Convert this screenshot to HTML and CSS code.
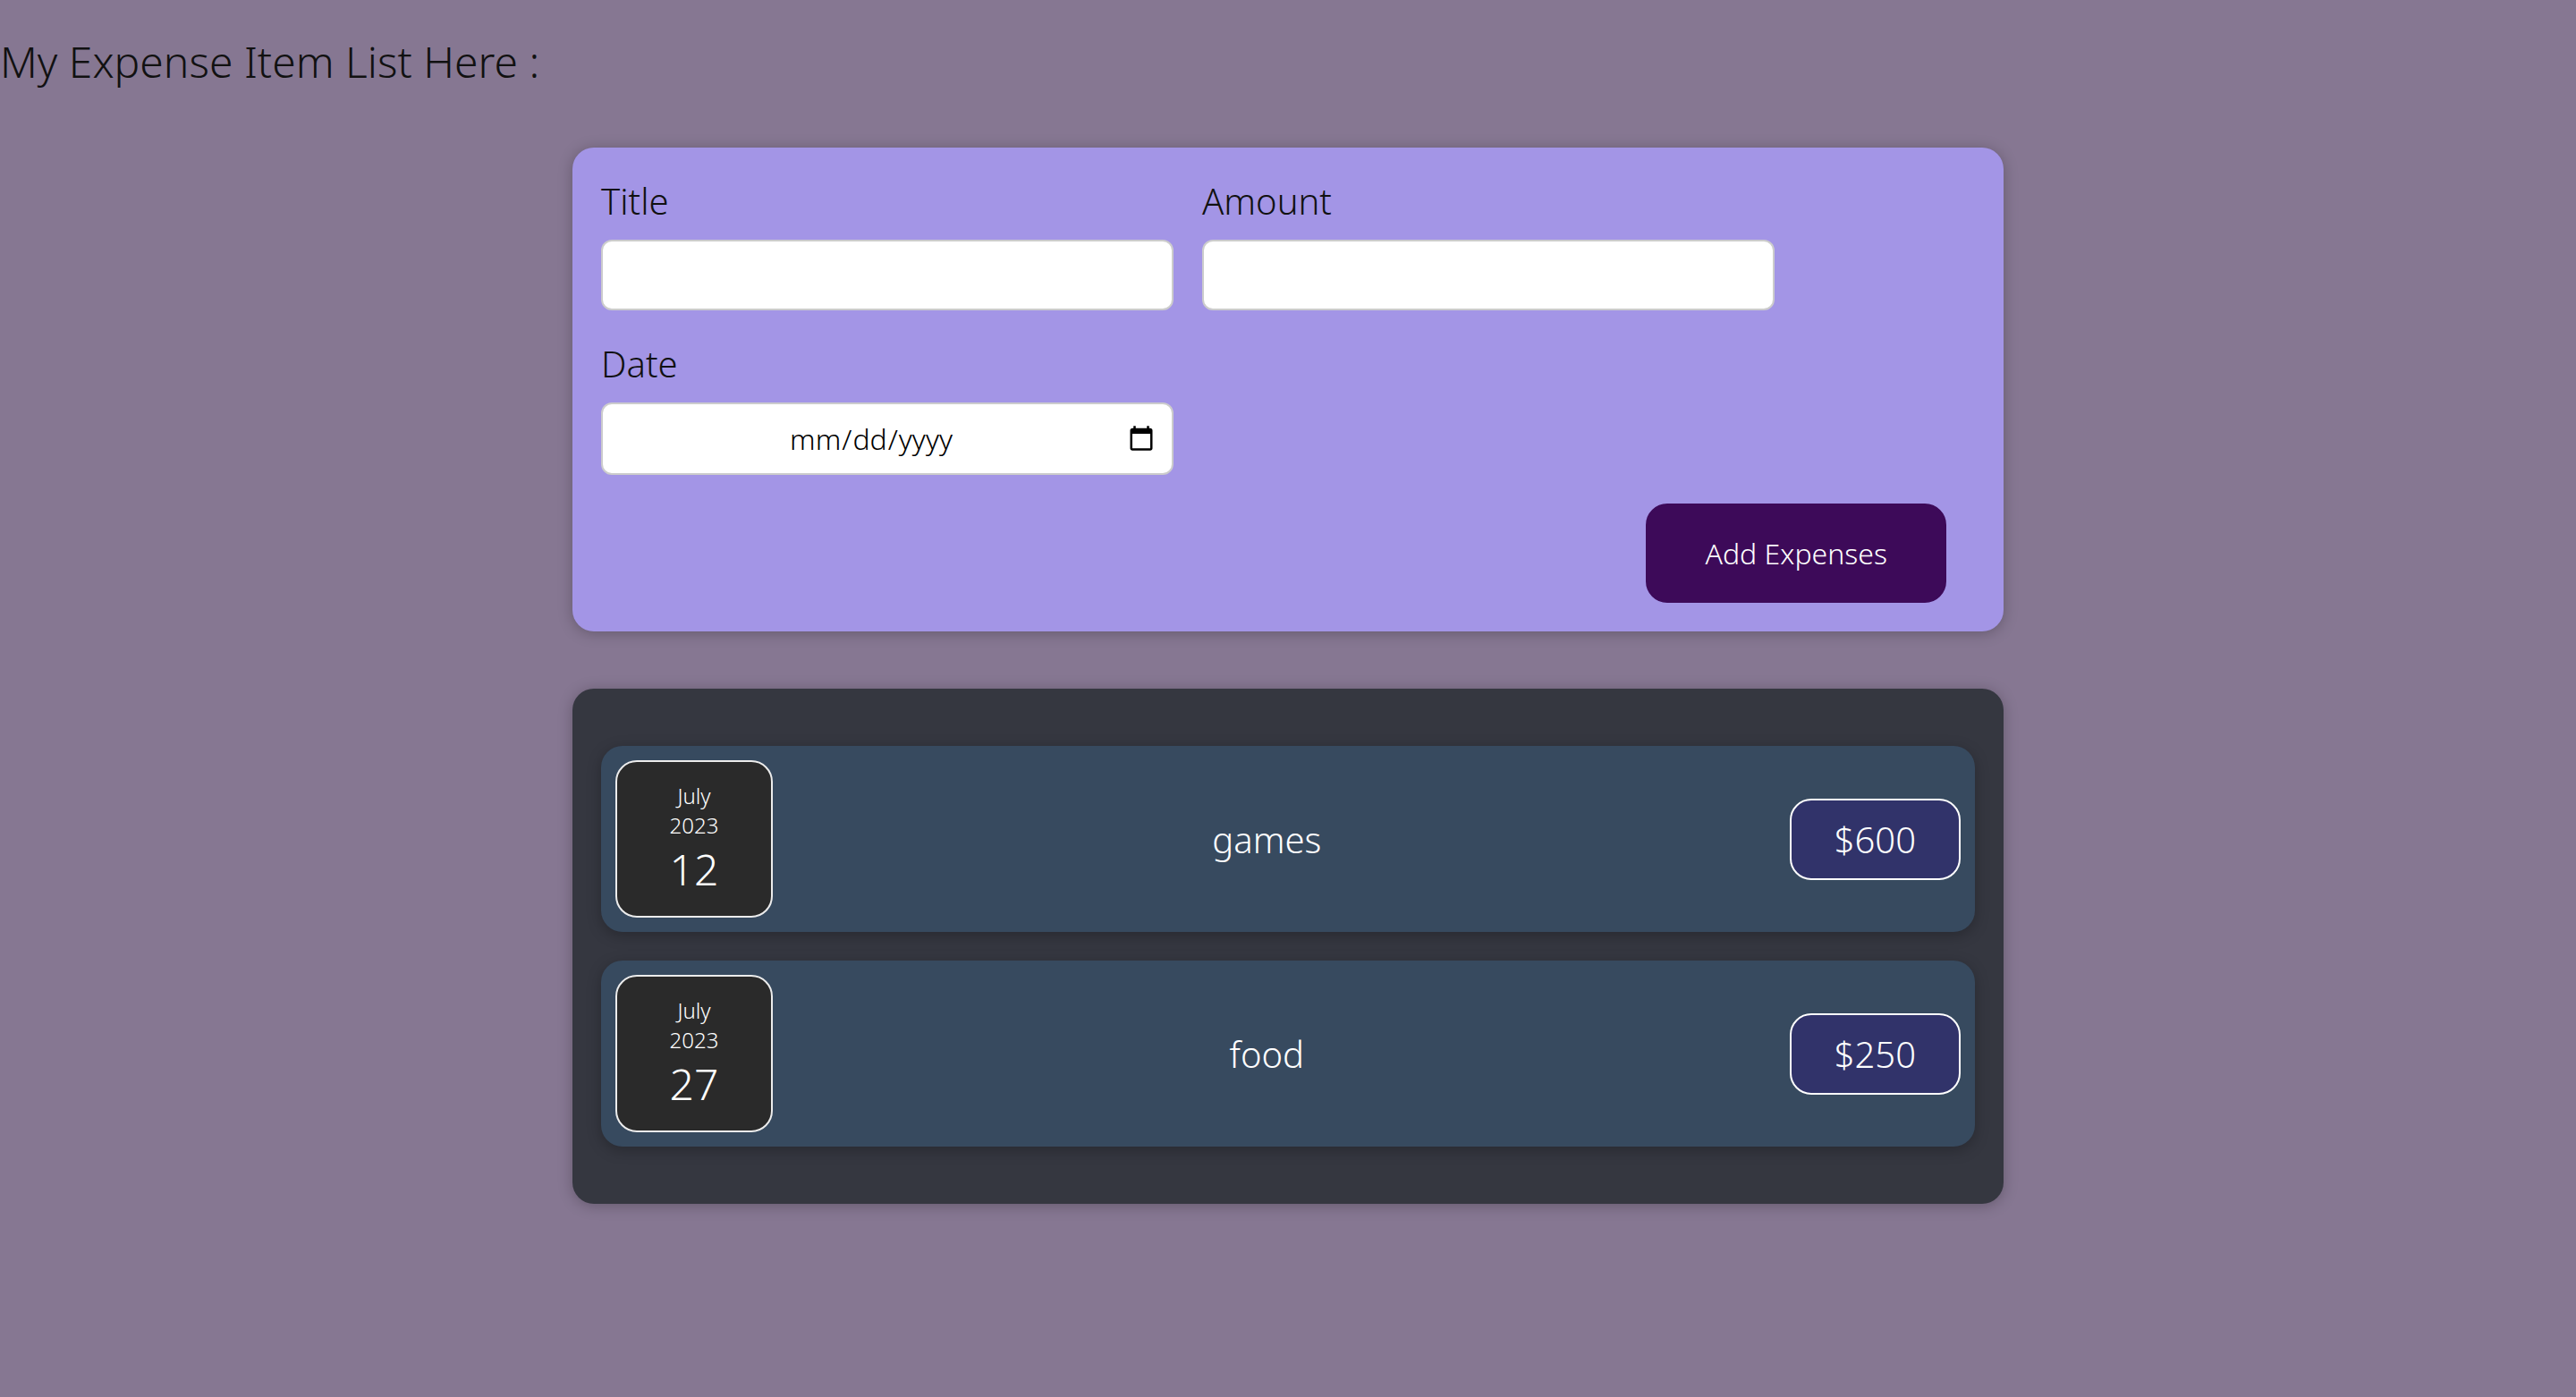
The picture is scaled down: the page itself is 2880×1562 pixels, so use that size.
FILE: index.html
```html
<!DOCTYPE html>
<html lang="en">
<head>
<meta charset="utf-8">
<title>Expenses</title>
<link rel="stylesheet" href="styles.css">
</head>
<body>
<h2 class="page-title">My Expense Item List Here :</h2>

<div class="new-expense">
  <form class="expense-form">
    <div class="controls">
      <div class="control">
        <label class="control-label">Title</label>
        <input class="control-input" type="text">
      </div>
      <div class="control">
        <label class="control-label">Amount</label>
        <input class="control-input" type="number">
      </div>
      <div class="control">
        <label class="control-label">Date</label>
        <input class="control-input date-input" type="date">
      </div>
    </div>
    <div class="actions">
      <button class="add-button" type="button">Add Expenses</button>
    </div>
  </form>
</div>

<div class="expenses">
  <div class="expense-item">
    <div class="expense-date">
      <div class="date-month">July</div>
      <div class="date-year">2023</div>
      <div class="date-day">12</div>
    </div>
    <h2 class="item-title">games</h2>
    <div class="item-price">$600</div>
  </div>
  <div class="expense-item">
    <div class="expense-date">
      <div class="date-month">July</div>
      <div class="date-year">2023</div>
      <div class="date-day">27</div>
    </div>
    <h2 class="item-title">food</h2>
    <div class="item-price">$250</div>
  </div>
</div>
</body>
</html>
```

FILE: styles.css
```css
* {
  box-sizing: border-box;
}

html, body {
  margin: 0;
  padding: 0;
}

body {
  background-color: #867792;
  font-family: "Noto Sans", "Open Sans", sans-serif;
  font-weight: 300;
  font-size: 32px;
  min-height: 100vh;
}

.page-title {
  margin: 36px 0 0 0;
  font-size: 48px;
  font-weight: 300;
  color: #111;
  line-height: normal;
}

.new-expense {
  background-color: #a395e6;
  width: 1600px;
  margin: 64px auto;
  padding: 32px;
  border-radius: 24px;
  box-shadow: 0 2px 16px rgba(0, 0, 0, 0.25);
}

.controls {
  display: flex;
  flex-wrap: wrap;
  gap: 32px;
  margin-bottom: 32px;
}

.control-label {
  display: block;
  font-size: 40px;
  color: #111;
  margin-bottom: 16px;
  line-height: normal;
}

.control-input {
  font: inherit;
  line-height: normal;
  padding: 16px;
  border-radius: 12px;
  border: 2px solid #ccc;
  width: 640px;
  background: #fff;
  color: #000;
}

.date-input {
  text-align: center;
}

.actions {
  text-align: right;
}

.add-button {
  font: inherit;
  line-height: normal;
  padding: 32px 64px;
  border: 2px solid #3d0a59;
  background-color: #3d0a59;
  color: #fff;
  border-radius: 24px;
  margin-right: 32px;
}

.expenses {
  background-color: #353740;
  width: 1600px;
  margin: 64px auto;
  padding: 32px;
  border-radius: 24px;
  box-shadow: 0 2px 16px rgba(0, 0, 0, 0.25);
}

.expense-item {
  display: flex;
  align-items: center;
  background-color: #374a5f;
  padding: 16px;
  margin: 32px 0;
  border-radius: 24px;
  box-shadow: 0 4px 16px rgba(0, 0, 0, 0.25);
}

.expense-date {
  display: flex;
  flex-direction: column;
  align-items: center;
  justify-content: center;
  width: 176px;
  height: 176px;
  border: 2px solid #ececec;
  background-color: #2a2a2a;
  color: #fff;
  border-radius: 24px;
  flex-shrink: 0;
}

.date-month,
.date-year {
  font-size: 24px;
  line-height: normal;
}

.date-day {
  font-size: 48px;
  line-height: normal;
}

.item-title {
  flex: 1;
  margin: 0 64px 0 32px;
  font-size: 40px;
  font-weight: 300;
  color: #fff;
  text-align: center;
}

.item-price {
  font-size: 40px;
  line-height: normal;
  color: #fff;
  background-color: #31336a;
  border: 2px solid #fff;
  padding: 16px 48px;
  border-radius: 24px;
}
```
